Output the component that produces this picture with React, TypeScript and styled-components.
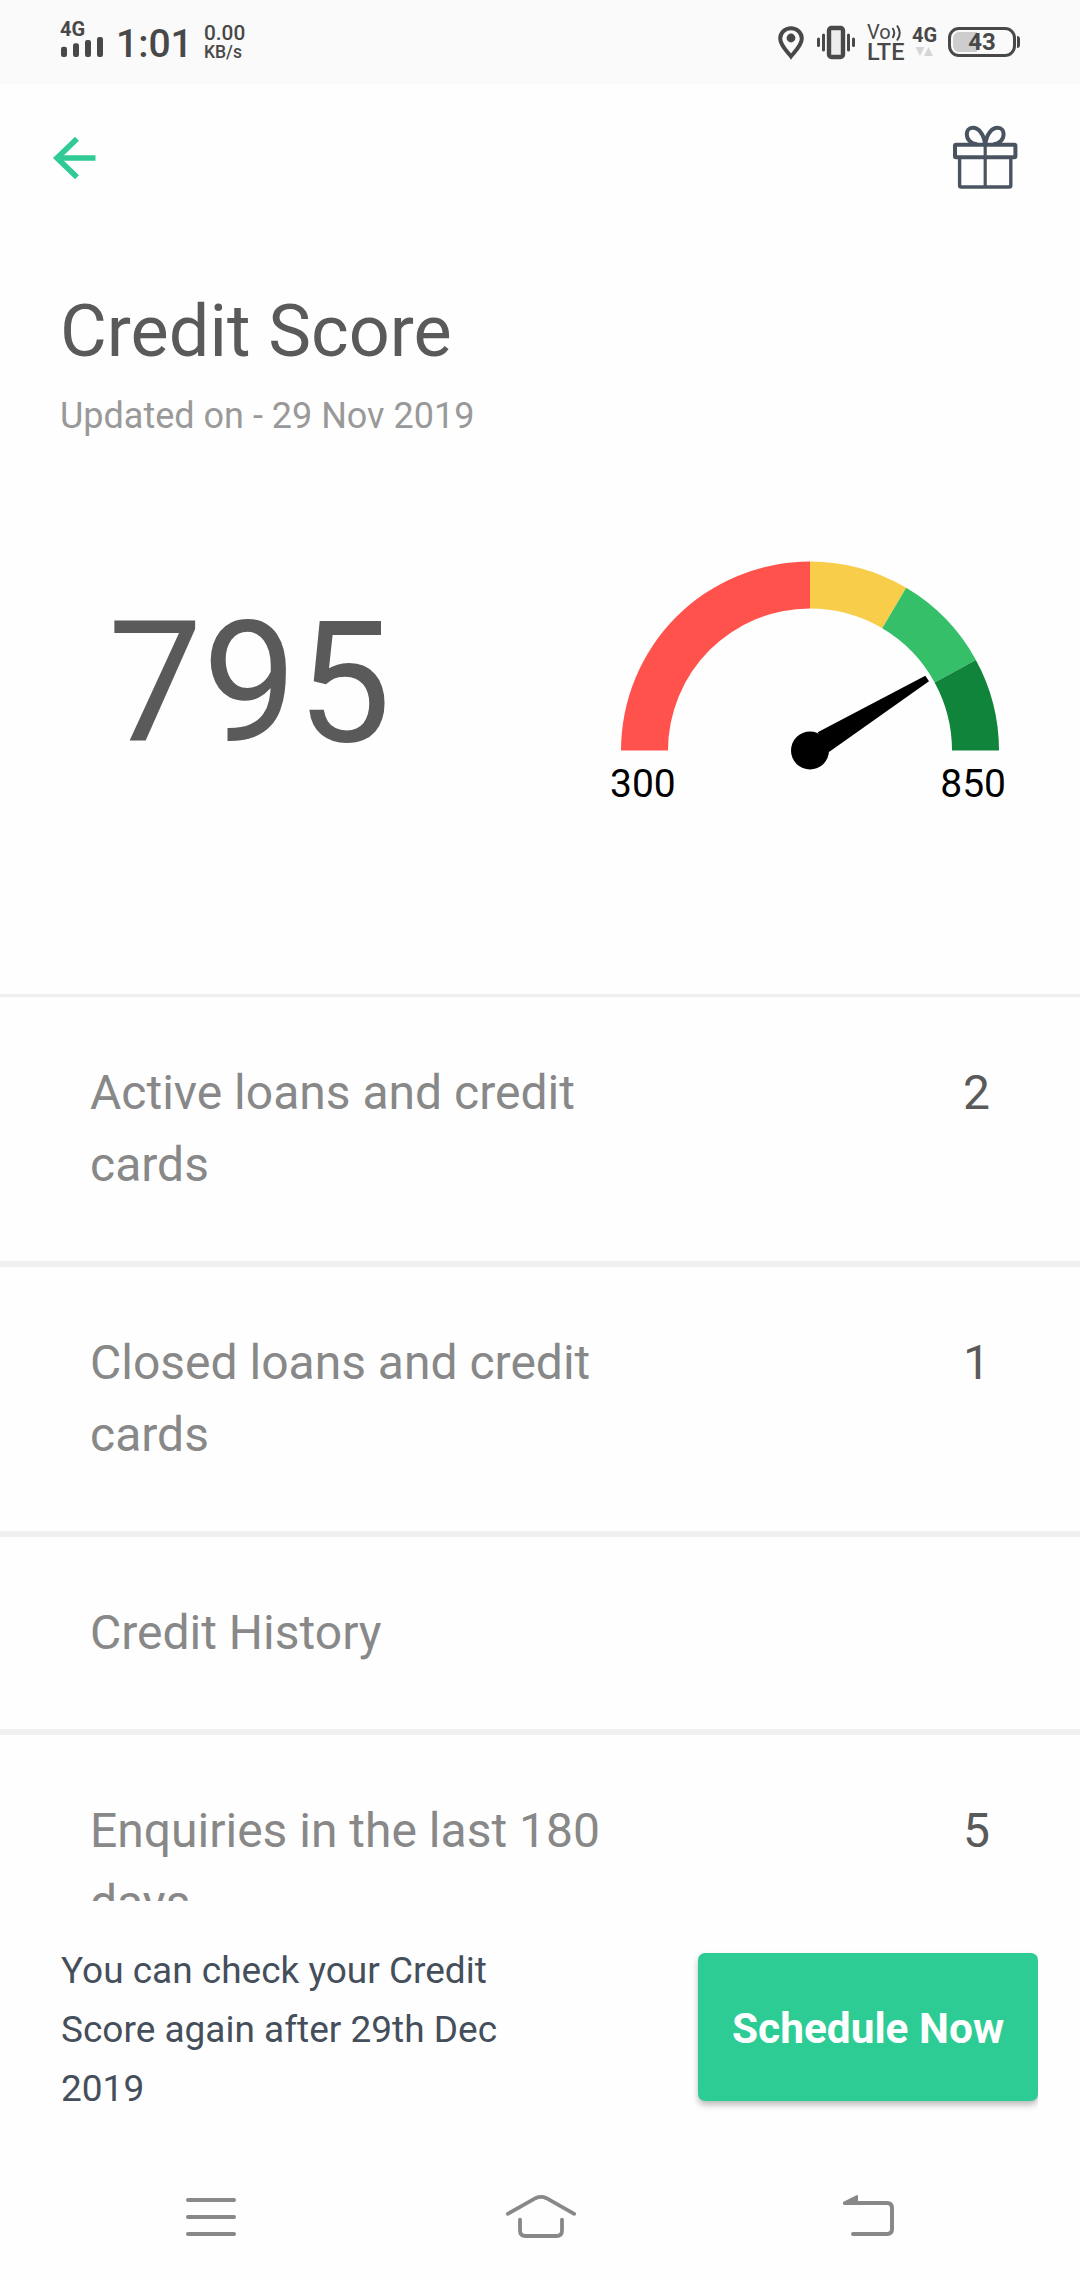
import React from "react";
import styled, { createGlobalStyle } from "styled-components";

const GlobalStyle = createGlobalStyle`
  * { box-sizing: border-box; }
  body {
    margin: 0;
    background: #fefefe;
    font-family: Roboto, "Liberation Sans", sans-serif;
  }
  svg { display: block; overflow: visible; flex: none; }
`;

const Screen = styled.div`
  display: flex;
  flex-direction: column;
  width: 1080px;
  height: 2280px;
  overflow: hidden;
  background: #fefefe;
`;

const StatusBar = styled.header`
  display: flex;
  justify-content: space-between;
  flex: none;
  height: 84px;
  padding: 0 64px 0 60px;
  background: #fafafa;
  color: #484848;
`;

const StatusGroup = styled.div`
  display: flex;
  align-items: flex-start;
`;

const StatusItem = styled.div<{ $top: number; $left?: number; $width?: number }>`
  display: flex;
  flex-direction: column;
  flex: none;
  width: ${(p) => (p.$width ? `${p.$width}px` : "auto")};
  padding-top: ${(p) => p.$top}px;
  margin-left: ${(p) => p.$left ?? 0}px;
`;

const StatusText = styled.span<{ $size: number; $line: number; $weight?: number }>`
  font-size: ${(p) => p.$size}px;
  line-height: ${(p) => p.$line}px;
  font-weight: ${(p) => p.$weight ?? 500};
  white-space: nowrap;
`;

const VoiceLine = styled.div`
  display: flex;
  height: 16px;
`;

const Battery = styled.div`
  position: relative;
  display: flex;
  align-items: center;
  justify-content: center;
  width: 68px;
  height: 30px;
  border: 3px solid #484848;
  border-radius: 11px;
  font-size: 24px;
  font-weight: 700;
  line-height: 24px;
`;

const BatteryFill = styled.i`
  position: absolute;
  left: 2px;
  top: 2px;
  width: 24px;
  height: 20px;
  border-radius: 6px 0 0 6px;
  background: #cdcdcd;
`;

const BatteryTip = styled.i`
  position: absolute;
  right: -7px;
  top: 6px;
  width: 3px;
  height: 12px;
  border-radius: 0 3px 3px 0;
  background: #484848;
`;

const BatteryLevel = styled.span`
  position: relative;
`;

const Toolbar = styled.div`
  display: flex;
  justify-content: space-between;
  align-items: flex-start;
  flex: none;
  height: 206px;
  padding: 42px 63px 0 53px;
`;

const IconButton = styled.button`
  padding: 0;
  border: 0;
  background: none;
`;

const BackButton = styled(IconButton)`
  padding-top: 10px;
`;

const Heading = styled.section`
  display: flex;
  flex-direction: column;
  gap: 21px;
  flex: none;
  height: 271px;
  padding-left: 60px;
`;

const Title = styled.h1`
  margin: 0;
  font-size: 72px;
  line-height: 84px;
  font-weight: 400;
  color: #5a5a5a;
`;

const Subtitle = styled.p`
  margin: 0;
  font-size: 36px;
  line-height: 42px;
  color: #999;
`;

const ScorePanel = styled.section`
  display: flex;
  justify-content: space-between;
  flex: none;
  height: 436px;
  padding: 0 73px 0 108px;
  border-bottom: 3px solid #f0f0f0;
`;

const Score = styled.div`
  padding-top: 24px;
  font-size: 168px;
  line-height: 197px;
  color: #5a5a5a;
`;

const Gauge = styled.div`
  width: 397px;
`;

const GaugeLabels = styled.div`
  display: flex;
  justify-content: space-between;
  padding: 1px 1px 0 0;
  font-size: 39px;
  line-height: 46px;
  color: #000;
`;

const List = styled.main`
  flex: none;
  height: 904px;
  overflow: hidden;
`;

const Row = styled.div`
  display: flex;
  justify-content: space-between;
  padding: 60px 90px;
  border-bottom: 6px solid #f0f0f0;
  font-size: 48px;
  line-height: 72px;
`;

const RowLabel = styled.span`
  width: 540px;
  color: #888;
`;

const RowValue = styled.span`
  color: #5a5a5a;
`;

const Footer = styled.footer`
  display: flex;
  justify-content: space-between;
  align-items: flex-start;
  flex: none;
  height: 279px;
  padding: 40px 42px 0 61px;
`;

const Note = styled.p`
  width: 450px;
  margin: 0;
  font-size: 37px;
  line-height: 59px;
  color: #454f5b;
`;

const ScheduleButton = styled.button`
  width: 340px;
  height: 148px;
  margin-top: 12px;
  padding: 3px 0 0;
  border: 0;
  border-radius: 7px;
  background: #2ecc95;
  box-shadow: 0 4px 6px rgba(0, 0, 0, 0.26);
  clip-path: inset(-10px 0 -11px -10px);
  font-family: inherit;
  font-size: 42.4px;
  font-weight: 700;
  line-height: 50px;
  color: #fff;
`;

const NavBar = styled.nav`
  display: flex;
  justify-content: space-between;
  align-items: flex-start;
  flex: none;
  height: 100px;
  padding: 15px 186px 0;
`;

const gaugeSegments = [
  { from: 180, to: 90, color: "#ff524d" },
  { from: 90, to: 59.4, color: "#f8cd49" },
  { from: 59.4, to: 28.65, color: "#36bf69" },
  { from: 28.65, to: 0, color: "#10843a" },
];

const OUTER = 189;
const INNER = 142;

function segmentPath(from: number, to: number) {
  const at = (r: number, deg: number) => {
    const a = (deg * Math.PI) / 180;
    return `${(200 + r * Math.cos(a)).toFixed(2)} ${(189.5 - r * Math.sin(a)).toFixed(2)}`;
  };
  return `M${at(OUTER, from)}A${OUTER} ${OUTER} 0 0 1 ${at(OUTER, to)}L${at(INNER, to)}A${INNER} ${INNER} 0 0 0 ${at(INNER, from)}Z`;
}

const rows = [
  { label: "Active loans and credit cards", value: "2" },
  { label: "Closed loans and credit cards", value: "1" },
  { label: "Credit History", value: "" },
  { label: "Enquiries in the last 180 days", value: "5" },
];

const SignalBars = () => (
  <svg width="44" height="21" viewBox="0 0 44 21" fill="#484848">
    <rect x="1" y="9.7" width="6" height="10.3" rx="2.2" />
    <rect x="13" y="6.2" width="6" height="13.8" rx="2.2" />
    <rect x="25" y="3" width="6" height="17" rx="2.2" />
    <rect x="37" y="0" width="6" height="20" rx="2.2" />
  </svg>
);

const PinIcon = () => (
  <svg width="26" height="34" viewBox="0 0 26 34">
    <path d="M13 2.2C6.9 2.2 2.2 6.9 2.2 12.6C2.2 19.5 9.6 26 13 30.4C16.4 26 23.8 19.5 23.8 12.6C23.8 6.9 19.1 2.2 13 2.2Z" fill="none" stroke="#484848" strokeWidth="4" />
    <circle cx="13" cy="12" r="4.4" fill="#484848" />
  </svg>
);

const VibrateIcon = () => (
  <svg width="38" height="34" viewBox="0 0 38 34" fill="#484848">
    <rect x="12" y="2" width="14" height="29" rx="2.5" fill="#ececec" stroke="#484848" strokeWidth="4.4" />
    <rect x="0" y="11.5" width="3" height="9.5" rx="1.5" />
    <rect x="5" y="7.5" width="3" height="18" rx="1.5" />
    <rect x="30" y="7.5" width="3" height="18" rx="1.5" />
    <rect x="35" y="11.5" width="3" height="9.5" rx="1.5" />
  </svg>
);

const BackArrow = () => (
  <svg width="44" height="44" viewBox="0 0 44 44" fill="none" stroke="#30cb94" strokeWidth="5.6">
    <path d="M24 2.8L4 22L24 41.2M3.2 22H42.5" />
  </svg>
);

const GiftIcon = () => (
  <svg width="64" height="64" viewBox="0 0 64 64" fill="none" stroke="#4a5461" strokeWidth="4" strokeLinejoin="round">
    <rect x="2" y="18.8" width="60.4" height="12.4" rx="1" />
    <path d="M6.6 32V59.5Q6.6 61 8.2 61H56.2Q57.8 61 57.8 59.5V32" strokeWidth="3.4" />
    <path d="M32.2 17V61" strokeWidth="3.2" />
    <path d="M32 18C31 8 25.5 1.8 19.8 1.8C15.6 1.8 13.8 5 13.8 8.2C13.8 13 17.5 17.6 24 18.2" />
    <path d="M32.4 18C33.4 8 38.9 1.8 44.6 1.8C48.8 1.8 50.6 5 50.6 8.2C50.6 13 46.9 17.6 40.4 18.2" />
  </svg>
);

const MenuIcon = () => (
  <svg width="50" height="50" viewBox="0 0 50 50" fill="#888">
    <rect x="0" y="3" width="50" height="4" rx="2" />
    <rect x="0" y="20" width="50" height="4" rx="2" />
    <rect x="0" y="37" width="50" height="4" rx="2" />
  </svg>
);

const HomeIcon = () => (
  <svg width="70" height="46" viewBox="-1 0 70 46" fill="none" stroke="#888" strokeWidth="3.8" strokeLinecap="round">
    <path d="M1.8 18.8L29.5 3.2Q35 0.6 40.5 3.2L68.2 18.8" />
    <path d="M14 24.6V35.5Q14 41 19.5 41H50.5Q56 41 56 35.5V24.6" />
  </svg>
);

const ReturnIcon = () => (
  <svg width="51" height="42" viewBox="0 0 51 42">
    <path d="M4 8H44Q49 8 49 13V34Q49 39 44 39H10" fill="none" stroke="#888" strokeWidth="4" strokeLinecap="round" />
    <path d="M0 8.5V7L14 0Q15 0 15 1V10H1.5Q0 10 0 8.5Z" fill="#888" />
  </svg>
);

export default function App() {
  return (
    <Screen>
      <GlobalStyle />
      <StatusBar>
        <StatusGroup>
          <StatusItem $top={21} $width={44}>
            <StatusText $size={20} $line={16} $weight={700}>4G</StatusText>
            <SignalBars />
          </StatusItem>
          <StatusItem $top={24} $left={12} $width={88}>
            <StatusText $size={39} $line={40} $weight={500}>1:01</StatusText>
          </StatusItem>
          <StatusItem $top={23}>
            <StatusText $size={20.8} $line={20}>0.00</StatusText>
            <StatusText $size={17.5} $line={18}>KB/s</StatusText>
          </StatusItem>
        </StatusGroup>
        <StatusGroup>
          <StatusItem $top={26}><PinIcon /></StatusItem>
          <StatusItem $top={26} $left={13}><VibrateIcon /></StatusItem>
          <StatusItem $top={24} $left={12} $width={37}>
            <VoiceLine>
              <StatusText $size={20} $line={16} $weight={400}>Vo</StatusText>
              <svg width="12" height="16" viewBox="0 0 12 16" fill="none" stroke="#484848" strokeWidth="2">
                <path d="M1.5 4Q5 9 1.5 14M6 1.5Q11.5 9 6 16.5" />
              </svg>
            </VoiceLine>
            <StatusText $size={23.5} $line={25} $weight={500}>LTE</StatusText>
          </StatusItem>
          <StatusItem $top={25} $left={8} $width={25}>
            <StatusText $size={20} $line={20} $weight={700}>4G</StatusText>
            <svg width="25" height="12" viewBox="0 0 25 12" fill="#d6d6d6">
              <path d="M3.5 2H12.5L8 11ZM12 11H21L16.5 2Z" />
            </svg>
          </StatusItem>
          <StatusItem $top={27} $left={11}>
            <Battery>
              <BatteryFill />
              <BatteryLevel>43</BatteryLevel>
              <BatteryTip />
            </Battery>
          </StatusItem>
        </StatusGroup>
      </StatusBar>

      <Toolbar>
        <BackButton aria-label="Back"><BackArrow /></BackButton>
        <IconButton aria-label="Rewards"><GiftIcon /></IconButton>
      </Toolbar>

      <Heading>
        <Title>Credit Score</Title>
        <Subtitle>Updated on - 29 Nov 2019</Subtitle>
      </Heading>

      <ScorePanel>
        <Score>795</Score>
        <Gauge>
          <svg width="397" height="199" viewBox="0 0 397 199">
            {gaugeSegments.map((s) => (
              <path key={s.color} d={segmentPath(s.from, s.to)} fill={s.color} />
            ))}
            <circle cx="200" cy="189.5" r="19" fill="#000" />
            <path d="M207.7 171.3L315.3 114.7L319 120.3L219 191Z" fill="#000" />
          </svg>
          <GaugeLabels>
            <span>300</span>
            <span>850</span>
          </GaugeLabels>
        </Gauge>
      </ScorePanel>

      <List>
        {rows.map((row) => (
          <Row key={row.label}>
            <RowLabel>{row.label}</RowLabel>
            <RowValue>{row.value}</RowValue>
          </Row>
        ))}
      </List>

      <Footer>
        <Note>You can check your Credit Score again after 29th Dec 2019</Note>
        <ScheduleButton>Schedule Now</ScheduleButton>
      </Footer>

      <NavBar>
        <MenuIcon />
        <HomeIcon />
        <ReturnIcon />
      </NavBar>
    </Screen>
  );
}
